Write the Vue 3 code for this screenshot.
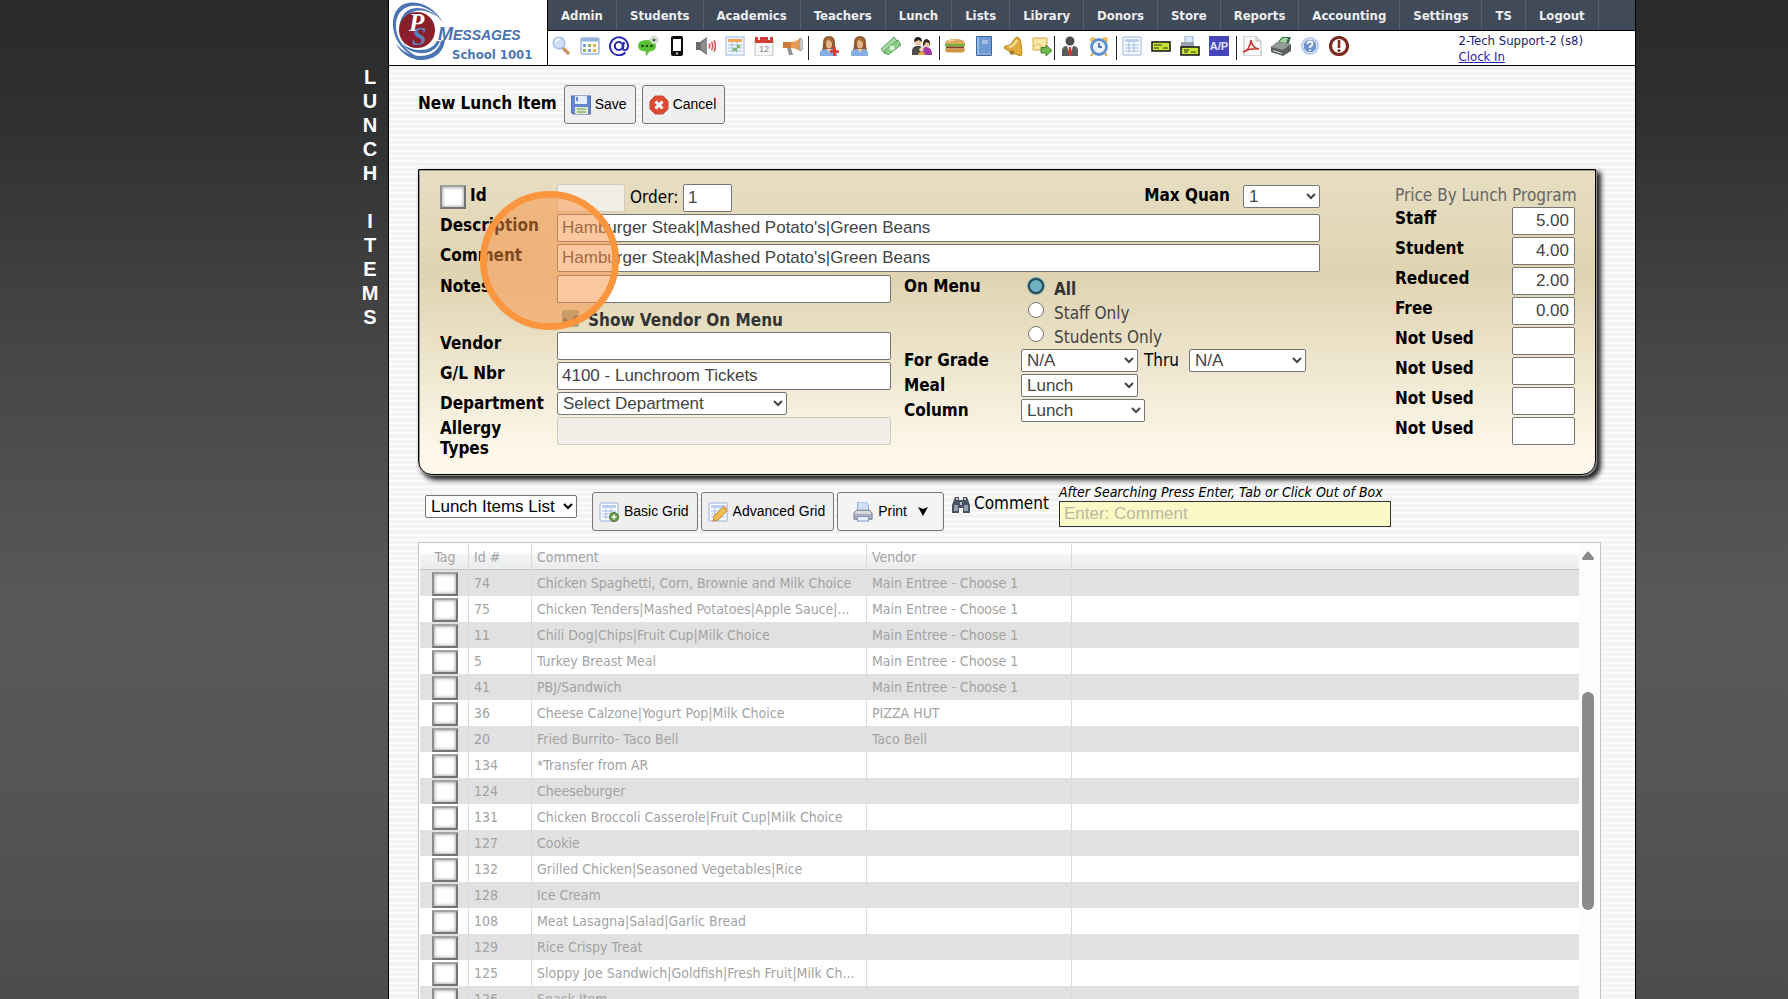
<script setup>
import { ref } from 'vue'

const sideTitle = 'LUNCH ITEMS'.split('')

const menu = ['Admin', 'Students', 'Academics', 'Teachers', 'Lunch', 'Lists', 'Library', 'Donors', 'Store', 'Reports', 'Accounting', 'Settings', 'TS', 'Logout']

const person = '<path d="M1 20v-3q0-3 4-4h9q4 1 4 4v3z" fill="#86aee6"/><path d="M7 12h6l-3 5z" fill="#f0c9a0"/><path d="M3 14q1-3 1-7 0-7 6-7t6 7q0 4 1 7l-4-1H8z" fill="#8f5a34"/><ellipse cx="10" cy="8" rx="3" ry="4.500" fill="#e8b58a"/><path d="M6 7q2-1 3-4 2 3 5 4V4l-4-3-4 3z" fill="#a86d3b"/>'
const grid = '<rect x="1" y="1" width="18" height="18" rx="1" fill="#fff" stroke="#8fb1de"/><rect x="3" y="3" width="14" height="3" fill="#b8cfee"/><path d="M3 9h14M3 12h14M3 15h14M7 6v11M12 6v11" stroke="#9dbbe4" fill="none"/>'

const groups = [
  {
    kind: 'first',
    icons: [
      ['Search', '<path d="M12 12l5 5" stroke="#c89a62" stroke-width="3.500" stroke-linecap="round"/><circle cx="8" cy="7" r="5.800" fill="#cfe0f8" stroke="#a9bfe3" stroke-width="1.500"/><path d="M4.500 6q1-3 4-3" stroke="#fff" stroke-width="1.500" fill="none"/>'],
      ['Schedule', '<rect x="1" y="2" width="18" height="16" rx="1" fill="#fff" stroke="#6f93c7"/><rect x="1.500" y="2.500" width="17" height="3" fill="#8fb1e2"/><path d="M3 8h3v3H3zM8 13h3v3H8z" fill="#7aa5dc"/><path d="M8 8h3v3H8zM3 13h3v3H3z" fill="#8dbb62"/><path d="M13 8h3v3h-3zM13 13h3v3h-3z" fill="#efb046"/>'],
      ['Email', '<path d="M16.500 16.500A9 9 0 1 1 19 10q0 4-3.200 4.200-2.300 0-1.800-2.600L15 6" fill="none" stroke="#2a2ab5" stroke-width="2"/><circle cx="9.800" cy="10" r="4" fill="none" stroke="#2a2ab5" stroke-width="2.200"/>'],
      ['Chat', '<path d="M9 4q9 0 9 6 0 5-6.500 5.500L8 20l-.5-4.500Q0 15 0 10q0-6 9-6z" fill="#5cc235"/><circle cx="4.500" cy="10" r="1.300" fill="#17430a"/><circle cx="9" cy="10" r="1.300" fill="#17430a"/><circle cx="13.500" cy="10" r="1.300" fill="#17430a"/><circle cx="16" cy="4" r="3.600" fill="#eef5ea" stroke="#b5c9ac"/><path d="M16 2v4M14 4h4" stroke="#234f16"/>'],
      ['Phone', '<rect x="4" y="0" width="12" height="20" rx="2" fill="#0c0c0c"/><rect x="6" y="3" width="8" height="12" fill="#fff"/><circle cx="10" cy="17.500" r="1.200" fill="#bbb"/>'],
      ['Speaker', '<path d="M0 6h4l7-5v18l-7-5H0z" fill="#6c6c6c"/><path d="M5 7l6-5v16l-6-5z" fill="#8d8d8d"/><path d="M13 7.500q1.500 2.500 0 5M15.500 6q2.500 4 0 8M18 4.500q3 5.500 0 11" stroke="#db5a5f" stroke-width="1.700" fill="none"/>'],
      ['Report', '<rect x="1" y="1" width="18" height="18" fill="#f4f8fe" stroke="#9ab8e2"/><rect x="3" y="3" width="14" height="3" fill="#f2a35c"/><path d="M3 9h14M3 12h14M3 15h14M7 6v11M12 6v11" stroke="#a8c0e0" fill="none"/><path d="M12 9h3v3h-3zM8 12h4v3H8z" fill="#7dba66"/>'],
      ['Calendar', '<rect x="1" y="2" width="18" height="18" rx="1" fill="#f5f5f5" stroke="#c2c2c2"/><path d="M1 1h18v6H1z" fill="#cf3d33"/><path d="M5 0v4M15 0v4" stroke="#fff" stroke-width="2"/><text x="10" y="16" text-anchor="middle" font-size="9" font-family="Liberation Sans, sans-serif" fill="#8a8a8a">12</text>'],
      ['Announce', '<path d="M8 6q5 0 9-4v13q-4-3-9-3z" fill="#e79a55"/><path d="M0 6h8v6H0z" fill="#c9793a"/><path d="M17 2q3 0 3 6.500T17 15z" fill="#d7d7d7" stroke="#a5a5a5"/><path d="M4 12h4l2 7H6z" fill="#8f9499"/>'],
    ],
  },
  {
    kind: 'wide',
    icons: [
      ['Add person', person + '<path d="M15.500 11v9M11 15.500h9" stroke="#e0372c" stroke-width="2.500"/>'],
      ['Person', person],
      ['Money', '<path d="M0 13L13 1l3 4L4 18z" fill="#a5d6a0" stroke="#5f9f60"/><path d="M3 15L17 4l3 5L7 19z" fill="#8ccb88" stroke="#5f9f60"/><circle cx="11" cy="12" r="2.500" fill="#d8f0d2"/>'],
      ['Family', '<path d="M0 19v-4q0-4 4-5h4q3 1 3 4v5z" fill="#4b4b4b"/><path d="M9 19q0-8 5-8 6 0 6 8z" fill="#9d3aa6"/><circle cx="6" cy="6" r="3.500" fill="#eec49c"/><path d="M2 6q0-5 4-5t4 5L7 4z" fill="#2c2420"/><circle cx="14.500" cy="8" r="3" fill="#eec49c"/><path d="M11 11V7q1-4 4-4 4 1 3 8l-1-4-3-1z" fill="#2c2420"/><circle cx="9.500" cy="13.500" r="2.200" fill="#f3cfa9"/><path d="M6 19q0-3 3.500-3t3.500 3z" fill="#e8a53c"/>'],
    ],
  },
  {
    kind: 'plain',
    icons: [
      ['Burger', '<path d="M0 8q0-5 10-5t10 5z" fill="#d9a75a"/><path d="M3 6q2-2 7-2" stroke="#f1d39a" stroke-width="1.500" fill="none"/><path d="M0 8h20v2.500H0z" fill="#77b03a"/><path d="M1 10.500h18v2H1z" fill="#7c3f20"/><path d="M0 12.500h20q0 4-3 4H3q-3 0-3-4z" fill="#cf9648"/>'],
      ['Book', '<rect x="2" y="0" width="16" height="20" rx="1" fill="#3a66a6"/><rect x="5" y="1" width="12" height="16" fill="#6d9ad3"/><path d="M3 1h2v18H3z" fill="#9dbbe2"/><path d="M5 18h12" stroke="#e8eef8"/><path d="M8 5h6M8 7h6" stroke="#d7e5f7"/>'],
      ['Bell', '<path d="M15 1q3 2 3 7l1 9-1 3q-9-2-17-8l1-2q6 0 8-5 2-4 5-4z" fill="#e2ad3c" stroke="#b98420"/><path d="M14 4q-3 6-8 7" stroke="#fbe19a" stroke-width="2" fill="none"/><circle cx="9" cy="16.500" r="2.300" fill="#a97722"/>'],
      ['Forward', '<path d="M1 2h14v12H1z" fill="#fbe7a8" stroke="#d9a63c"/><path d="M1 11l5-3 5 3" fill="none" stroke="#e0b65a"/><path d="M9 11.500h5V9l6 5.500-6 5.500v-3H9z" fill="#74b84d" stroke="#42872a"/>'],
    ],
  },
  {
    kind: 'tight',
    icons: [
      ['Manager', '<circle cx="10" cy="5" r="4.500" fill="#4e4e4e"/><path d="M2 20v-5q0-5 5-5h6q5 0 5 5v5z" fill="#5b5b5b"/><path d="M7 10h6l-3 10z" fill="#fff"/><path d="M9 11h2l1 6-2 3-2-3z" fill="#cc3c35"/>'],
      ['Clock', '<circle cx="4" cy="4" r="3" fill="#eec261"/><circle cx="16" cy="4" r="3" fill="#eec261"/><path d="M4 17l-2 3M16 17l2 3" stroke="#d7a845" stroke-width="2"/><circle cx="10" cy="11" r="7.500" fill="#e9f1fb" stroke="#5f8fce" stroke-width="2.800"/><path d="M10 7v4h3" stroke="#35588c" stroke-width="1.500" fill="none"/>'],
    ],
  },
  {
    kind: 'plain',
    icons: [
      ['Table', grid],
      ['Check', '<rect x="1" y="6" width="18" height="9" fill="#c8e632" stroke="#111" stroke-width="1.500"/><path d="M3 9h8M3 12h5M12 12h5" stroke="#333"/>'],
      ['Print check', '<path d="M5 0h8v8H5z" fill="#d9e7f7" stroke="#8aa9cf"/><rect x="1" y="6" width="13" height="7" rx="1" fill="#9aa4b0"/><rect x="1" y="11" width="18" height="8" fill="#c8e632" stroke="#111" stroke-width="1.500"/><path d="M4 14h5M4 16h4M11 16h5" stroke="#333"/>'],
      ['A/P', '<path d="M0 0h20v20H0z" fill="#4646b8"/><text x="10" y="14" text-anchor="middle" font-size="11" font-weight="bold" font-family="Liberation Sans, sans-serif" fill="#e3e6fa">A/P</text>'],
    ],
  },
  {
    kind: 'plain',
    icons: [
      ['PDF', '<path d="M2 0h12l5 5v15H2z" fill="#f8f8f8" stroke="#b9b9b9"/><path d="M14 0v5h5" fill="#e3e3e3" stroke="#b9b9b9"/><path d="M1 16q7-2 8-12 1 8 8 9-9-1-16 3z" fill="none" stroke="#c8372f" stroke-width="1.600"/>'],
      ['Printer', '<path d="M6 7l5-6 9 0-3 9z" fill="#3f6d4c"/><path d="M8 6l4-4 5 0-2 5z" fill="#a6d3a2"/><path d="M0 11l6-5 14 2v7l-8 5-12-4z" fill="#5b605c"/><path d="M0 11l6-5 14 2-8 6z" fill="#959b96"/><path d="M2 14l9 3v1l-9-3z" fill="#dfe3df"/>'],
      ['Help', '<circle cx="10" cy="10" r="9" fill="#b5c9e8"/><circle cx="10" cy="10" r="6.800" fill="#6f92cb" stroke="#e5edf8"/><path d="M7.500 8q0-2.500 2.500-2.500T12.500 8q0 1.500-2.500 2.500v1.500M10 13.500v1.500" stroke="#fff" stroke-width="1.800" fill="none"/>'],
      ['Alert', '<circle cx="10" cy="10" r="8.500" fill="#fff" stroke="#7d2820" stroke-width="3.200"/><path d="M10 4v8" stroke="#7d2820" stroke-width="2.600"/><circle cx="10" cy="14.500" r="1.500" fill="#7d2820"/>'],
    ],
  },
]

const description = ref("Hamburger Steak|Mashed Potato's|Green Beans")
const comment = ref("Hamburger Steak|Mashed Potato's|Green Beans")
const account = ref('4100 - Lunchroom Tickets')
const order = ref('1')
const onMenu = ref('All')
const menuChoices = ['All', 'Staff Only', 'Students Only']

const prices = ref([
  { label: 'Staff', value: '5.00' },
  { label: 'Student', value: '4.00' },
  { label: 'Reduced', value: '2.00' },
  { label: 'Free', value: '0.00' },
  { label: 'Not Used', value: '' },
  { label: 'Not Used', value: '' },
  { label: 'Not Used', value: '' },
  { label: 'Not Used', value: '' },
])

const main = 'Main Entree - Choose 1'
const items = [
  [74, 'Chicken Spaghetti, Corn, Brownie and Milk Choice', main],
  [75, 'Chicken Tenders|Mashed Potatoes|Apple Sauce|...', main],
  [11, 'Chili Dog|Chips|Fruit Cup|Milk Choice', main],
  [5, 'Turkey Breast Meal', main],
  [41, 'PBJ/Sandwich', main],
  [36, 'Cheese Calzone|Yogurt Pop|Milk Choice', 'PIZZA HUT'],
  [20, 'Fried Burrito- Taco Bell', 'Taco Bell'],
  [134, '*Transfer from AR', ''],
  [124, 'Cheeseburger', ''],
  [131, 'Chicken Broccoli Casserole|Fruit Cup|Milk Choice', ''],
  [127, 'Cookie', ''],
  [132, 'Grilled Chicken|Seasoned Vegetables|Rice', ''],
  [128, 'Ice Cream', ''],
  [108, 'Meat Lasagna|Salad|Garlic Bread', ''],
  [129, 'Rice Crispy Treat', ''],
  [125, 'Sloppy Joe Sandwich|Goldfish|Fresh Fruit|Milk Ch...', ''],
  [126, 'Snack Item', ''],
]
</script>

<template>
  <div class="page">
    <h1 class="side-title">
      <span v-for="(letter, i) in sideTitle" :key="i">{{ letter }}</span>
    </h1>

    <div class="sheet">
      <header class="top">
        <a class="logo" href="#">
          <svg viewBox="0 0 157 64" width="157" height="64">
            <g fill="#4a74b4">
              <path d="M54 23C46 6 27-1 15 4C2 10 1 29 9 42C15 51 22 56 31 58C16 51 8 40 7 28C6 16 12 8 22 6C34 4 46 11 54 23z" />
              <path d="M49 18C39 6 22 5 15 14C8 23 9 36 17 46C12 34 12 24 18 16C26 8 39 9 49 18z" />
              <path d="M56 39C55 54 43 61 29 60C19 58 11 52 7 44C14 52 22 56 31 56C42 56 50 50 52 41z" />
              <path d="M51 41C48 50 39 54 30 53C23 52 17 49 13 44C19 48 25 50 31 50C39 50 45 47 48 41z" />
            </g>
            <circle cx="28" cy="30" r="18" fill="#8a1f2c" />
            <text x="20" y="31" class="mono-p">P</text>
            <text x="23" y="45" class="mono-s">S</text>
            <text x="49" y="40" class="brand">M<tspan class="brand-small">ESSAGES</tspan></text>
            <text x="63" y="59" class="school">School 1001</text>
          </svg>
        </a>
        <div class="top-main">
          <nav class="menu">
            <a v-for="m in menu" :key="m" href="#">{{ m }}</a>
          </nav>
          <div class="tools">
            <div v-for="(g, gi) in groups" :key="gi" class="group" :class="g.kind">
              <button v-for="ic in g.icons" :key="ic[0]" type="button" class="tool" :aria-label="ic[0]">
                <svg viewBox="0 0 20 20" width="20" height="20" v-html="ic[1]"></svg>
              </button>
            </div>
            <div class="user">
              <span>2-Tech Support-2 (s8)</span>
              <a href="#">Clock In</a>
            </div>
          </div>
        </div>
      </header>

      <main class="body">
        <div class="heading">
          <h2>New Lunch Item</h2>
          <button type="button" class="btn">
            <svg viewBox="0 0 20 20" width="20" height="20">
              <path d="M0 1h20v18H2l-2-2z" fill="#6586cf" stroke="#4562a8" />
              <path d="M4 1h12v8H4z" fill="#e6edfa" />
              <path d="M5 2h2v4H5z" fill="#6586cf" />
              <path d="M4 12h13v7H4z" fill="#dfe8d8" />
              <path d="M6 14h9M6 17h9" stroke="#97b86a" stroke-width="1.500" />
            </svg>
            <span>Save</span>
          </button>
          <button type="button" class="btn">
            <svg viewBox="0 0 20 20" width="20" height="20">
              <path d="M6 1h8l5 5v8l-5 5H6l-5-5V6z" fill="#dd4a34" stroke="#c94a38" stroke-linejoin="round" />
              <path d="M6.500 6.500l7 7M13.500 6.500l-7 7" stroke="#fff" stroke-width="3" />
            </svg>
            <span>Cancel</span>
          </button>
        </div>

        <form class="panel" @submit.prevent>
          <div class="form">
            <div class="line">
              <span class="label id-label">
                <input id="tag-item" type="checkbox" class="tag" />
                <label for="tag-item">Id</label>
              </span>
              <input class="box id-box" aria-label="Id" disabled />
              <label class="order" for="order">Order:</label>
              <input id="order" v-model="order" class="box order-box" />
              <label class="quan" for="quan">Max Quan</label>
              <select id="quan" class="select quan-select"><option>1</option></select>
            </div>
            <div class="line">
              <label class="label" for="desc">Description</label>
              <input id="desc" v-model="description" class="box grow" />
            </div>
            <div class="line">
              <label class="label" for="comm">Comment</label>
              <input id="comm" v-model="comment" class="box grow" />
            </div>

            <div class="split">
              <div class="half">
                <div class="line">
                  <label class="label" for="notes">Notes</label>
                  <input id="notes" class="box grow" />
                </div>
                <div class="line show-vendor">
                  <input id="show" type="checkbox" checked disabled />
                  <label for="show">Show Vendor On Menu</label>
                </div>
                <div class="line">
                  <label class="label" for="vendor">Vendor</label>
                  <input id="vendor" class="box grow" />
                </div>
                <div class="line">
                  <label class="label" for="gl">G/L Nbr</label>
                  <input id="gl" v-model="account" class="box grow" />
                </div>
                <div class="line">
                  <label class="label" for="dept">Department</label>
                  <select id="dept" class="select dept-select"><option>Select Department</option></select>
                </div>
                <div class="line">
                  <label class="label" for="allergy">Allergy Types</label>
                  <input id="allergy" class="box grow" disabled />
                </div>
              </div>

              <div class="half">
                <div class="line radios">
                  <span class="label">On Menu</span>
                  <div class="choices">
                    <label v-for="c in menuChoices" :key="c" :class="{ on: onMenu === c }">
                      <input v-model="onMenu" type="radio" name="menu" :value="c" />
                      <span>{{ c }}</span>
                    </label>
                  </div>
                </div>
                <div class="line">
                  <label class="label" for="g1">For Grade</label>
                  <select id="g1" class="select grade"><option>N/A</option></select>
                  <label class="thru" for="g2">Thru</label>
                  <select id="g2" class="select grade"><option>N/A</option></select>
                </div>
                <div class="line">
                  <label class="label" for="meal">Meal</label>
                  <select id="meal" class="select grade"><option>Lunch</option></select>
                </div>
                <div class="line">
                  <label class="label" for="col">Column</label>
                  <select id="col" class="select column"><option>Lunch</option></select>
                </div>
              </div>
            </div>
          </div>

          <fieldset class="prices">
            <legend>Price By Lunch Program</legend>
            <div v-for="(p, i) in prices" :key="i" class="price">
              <label :for="'price' + i">{{ p.label }}</label>
              <input :id="'price' + i" v-model="p.value" class="box price-box" />
            </div>
          </fieldset>

          <div class="spot"></div>
        </form>

        <div class="bar">
          <select class="select list-select" aria-label="List"><option>Lunch Items List</option></select>
          <div class="bar-buttons">
            <button type="button" class="btn">
              <svg viewBox="0 0 20 20" width="20" height="20">
                <g v-html="grid"></g>
                <circle cx="15" cy="15" r="4.500" fill="#6a9a45" stroke="#47722a" />
                <path d="M15 12.500v5M12.500 15h5" stroke="#fff" stroke-width="1.500" />
              </svg>
              <span>Basic Grid</span>
            </button>
            <button type="button" class="btn">
              <svg viewBox="0 0 20 20" width="20" height="20">
                <g v-html="grid"></g>
                <path d="M5 19l1-5 9-9 4 4-9 9z" fill="#f0bd55" stroke="#c98f2c" />
                <path d="M15 5l2-1 2 2v3z" fill="#e79a88" />
              </svg>
              <span>Advanced Grid</span>
            </button>
            <button type="button" class="btn print">
              <svg viewBox="0 0 22 22" width="20" height="20">
                <path d="M5 0h9l3 3v9H5z" fill="#cfe0f7" stroke="#8aa8d4" />
                <path d="M1 12l3-3h14l3 3v7H1z" fill="#a9aeb8" stroke="#747b86" />
                <path d="M2 12l2-2h14l2 2v1H2z" fill="#d9dde2" />
                <path d="M5 16h12v5H5z" fill="#e6effb" stroke="#6f92c6" />
              </svg>
              <span>Print</span>
              <svg class="caret" viewBox="0 0 10 9" width="10" height="9"><path d="M0 0l5 2 5-2-5 9z" /></svg>
            </button>
          </div>
          <svg class="binoculars" viewBox="0 0 18 18" width="18" height="18">
            <path d="M3 2h4v3h4V2h4l3 8v8h-7v-5H7v5H0v-8z" fill="#4a5361" />
            <path d="M2 10h4v6H2zM12 10h4v6h-4z" fill="#93a0b0" />
            <path d="M4 3h2v2H4zM12 3h2v2h-2zM8 7h2v3H8z" fill="#b9c3cf" />
          </svg>
          <label class="bar-label" for="find">Comment</label>
          <div class="search">
            <em>After Searching Press Enter, Tab or Click Out of Box</em>
            <input id="find" placeholder="Enter: Comment" />
          </div>
        </div>

        <section class="grid">
          <table>
            <colgroup><col class="c-tag" /><col class="c-id" /><col class="c-comment" /><col class="c-vendor" /><col /></colgroup>
            <thead>
              <tr><th class="tag-cell">Tag</th><th>Id #</th><th>Comment</th><th>Vendor</th><th></th></tr>
            </thead>
            <tbody>
              <tr v-for="r in items" :key="r[0]">
                <td class="tag-cell"><input type="checkbox" class="tag" :aria-label="'Tag ' + r[0]" /></td>
                <td>{{ r[0] }}</td>
                <td>{{ r[1] }}</td>
                <td>{{ r[2] }}</td>
                <td></td>
              </tr>
            </tbody>
          </table>
          <div class="scroll">
            <svg viewBox="0 0 12 9" width="12" height="9"><path d="M5 1q1-1 2 0l5 6q0 2-1 2H1Q0 9 0 7z" fill="#8b8b8b" /></svg>
            <span class="thumb"></span>
          </div>
        </section>
      </main>
    </div>
  </div>
</template>

<style>
body {
  overflow: hidden;
  background: #505050;
}
</style>

<style scoped>
.page {
  --ui: "DejaVu Sans Condensed", "Noto Sans", sans-serif;
  --field: "Liberation Sans", Arial, sans-serif;
  display: grid;
  grid-template-columns: 388px minmax(0, 1fr) 152px;
  height: 100vh;
  box-sizing: border-box;
  overflow: hidden;
  background: linear-gradient(#2a2a2a 0, #2f3031 12%, #454545 34%, #585858 60%, #565656 75%, #4c4c4c 100%);
  font-family: var(--ui);
  font-size: 17px;
  color: #000;
}
.page * {
  box-sizing: border-box;
}
h1,
h2 {
  margin: 0;
}
.side-title {
  display: flex;
  flex-direction: column;
  align-items: flex-end;
  padding: 65px 8px 0 0;
  font: bold 20px/24px var(--field);
  color: #fff;
}
.side-title span {
  width: 20px;
  height: 24px;
  text-align: center;
}
.sheet {
  display: flex;
  flex-direction: column;
  min-height: 0;
  border: solid #000;
  border-width: 0 1px;
  background: repeating-linear-gradient(#fafafa 0, #fafafa 2px, #f1f1f1 3px, #f1f1f1 5px, #fbfbfb 6px, #fbfbfb 8px, #f1f1f1 9px, #f1f1f1 10px, #fbfbfb 11px, #fbfbfb 13px, #f1f1f1 14px, #f1f1f1 15px, #fafafa 16px);
}

/* header */
.top {
  display: flex;
  height: 66px;
  background: #fff;
  border-bottom: 1px solid #000;
}
.logo {
  width: 159px;
  border-right: 1px solid #000;
}
.logo svg {
  display: block;
}
.mono-p {
  font: italic bold 25px "Liberation Serif", serif;
  fill: #fff;
}
.mono-s {
  font: italic bold 26px "Liberation Serif", serif;
  fill: #5a82c0;
}
.brand {
  font: italic bold 18px var(--field);
  fill: #4a72b0;
}
.brand-small {
  font-size: 14px;
}
.school {
  font: bold 13px var(--ui);
  fill: #4a78b5;
}
.top-main {
  flex: 1;
  display: flex;
  flex-direction: column;
}
.menu {
  display: flex;
  height: 31px;
  background: #414a59;
  border-bottom: 1px solid #000;
}
.menu a {
  padding: 0 13px;
  border-right: 1px solid #596170;
  font-size: 13px;
  font-weight: bold;
  line-height: 31px;
  color: #eceef0;
  text-decoration: none;
}
.tools {
  display: flex;
  flex: 1;
  align-items: flex-start;
  padding: 5px 52px 0 3px;
}
.group {
  display: flex;
  gap: 9px;
  height: 24px;
}
.group + .group {
  margin-left: 7px;
  padding-left: 5px;
  border-left: 1px solid #222;
}
.group.wide {
  gap: 11px;
}
.group + .group.wide {
  margin-left: 5px;
  padding-left: 10px;
}
.group + .group.tight {
  margin-left: 2px;
}
.tool {
  width: 20px;
  height: 20px;
  padding: 0;
  border: 0;
  background: none;
}
.tool svg {
  display: block;
}
.user {
  display: flex;
  flex-direction: column;
  margin-left: auto;
  margin-top: -3px;
  font-size: 13px;
  line-height: 16px;
  color: #1c1a72;
}
.user a {
  color: #2a20b0;
}

/* heading */
.body {
  flex: 1;
  display: flex;
  flex-direction: column;
  min-height: 0;
  padding: 19px 34px 0 29px;
}
.heading {
  display: flex;
  align-items: center;
  gap: 6px;
  height: 39px;
  margin-bottom: 45px;
}
h2 {
  padding: 0 1px 3px 0;
  font-size: 17px;
  line-height: 20px;
}
.btn {
  display: inline-flex;
  align-items: center;
  gap: 4px;
  height: 39px;
  padding: 0 8px 0 6px;
  border: 1px solid #767676;
  border-radius: 3px;
  background: #efefef;
  font: 14px var(--field);
  color: #000;
  white-space: nowrap;
}
.btn span {
  padding-bottom: 2px;
}

/* form panel */
.panel {
  position: relative;
  display: grid;
  grid-template-columns: minmax(0, 1fr) 180px;
  column-gap: 75px;
  margin-right: 5px;
  height: 306px;
  padding: 14px 20px 0 21px;
  border: 1px solid #000;
  border-radius: 0 0 14px 14px;
  background: linear-gradient(#e7dec2 0, #dfd3b1 35%, #fcf7e9 92%);
  box-shadow: inset 1px 1px 0 #9a9484, 1px 1px 0 #8e8e8e, 4px 4px 5px 1px #222;
}
.form {
  display: flex;
  flex-direction: column;
  gap: 2px;
}
.line {
  display: flex;
  align-items: flex-start;
}
.label {
  flex: 0 0 117px;
  padding: 1px 8px 0 0;
  font-weight: bold;
  line-height: 20px;
}
.line > .label {
  height: 21px;
}
.box {
  height: 28px;
  min-width: 0;
  padding: 0 4px;
  border: 1px solid #767676;
  border-radius: 2px;
  background: #fff;
  font: 17px var(--field);
  color: #444;
}
.box:disabled {
  border-color: #cfcbbd;
  background: #f0eee6;
}
.grow {
  flex: 1;
}
.id-label {
  display: flex;
  gap: 4px;
}
.tag {
  appearance: none;
  flex: none;
  width: 26px;
  height: 24px;
  margin: 0;
  border: 2px solid;
  border-color: #a2a2a2 #757575 #757575 #8d8d8d;
  background: #fff;
  box-shadow: inset 0 0 3px 1px #b5b5b5;
}
.id-box {
  width: 68px;
}
.order {
  width: 58px;
  padding-left: 5px;
  line-height: 26px;
}
.order-box {
  width: 49px;
}
.quan {
  margin-left: auto;
  padding-right: 13px;
  font-weight: bold;
  line-height: 22px;
}
.select {
  height: 23px;
  padding: 0 0 0 1px;
  border: 1px solid #767676;
  border-radius: 2px;
  background: #fff;
  font: 17px var(--field);
  color: #444;
}
.quan-select {
  width: 77px;
  margin-top: 1px;
}
.split {
  display: grid;
  grid-template-columns: 451fr 416fr;
  column-gap: 13px;
  margin-top: 1px;
}
.half {
  display: flex;
  flex-direction: column;
  gap: 2px;
}
.show-vendor {
  align-items: center;
  height: 25px;
  padding: 2px 0 0 122px;
  gap: 9px;
  font-weight: bold;
  color: #333;
}
.show-vendor label {
  padding-top: 2px;
}
.show-vendor input {
  appearance: none;
  display: grid;
  place-items: center;
  width: 17px;
  height: 17px;
  margin: 0;
  border-radius: 2px;
  background: #9ba592;
}
.show-vendor input::before {
  content: "";
  width: 10px;
  height: 6px;
  border: solid #5b5a4a;
  border-width: 0 0 3px 3px;
  transform: rotate(-45deg);
}
.dept-select {
  width: 230px;
}
.radios {
  height: 72px;
}
.choices {
  display: flex;
  flex-direction: column;
}
.radios .label {
  margin-right: 7px;
}
.choices label {
  display: flex;
  gap: 10px;
  height: 24px;
  line-height: 28px;
  color: #444;
}
.choices .on {
  font-weight: bold;
  color: #333;
}
.choices input {
  appearance: none;
  width: 16px;
  height: 16px;
  margin: 3px 0 0;
  border: 1px solid #767676;
  border-radius: 50%;
  background: #fff;
}
.choices input:checked {
  border: 2px solid #234a56;
  background: #6fb0c2;
  box-shadow: 0 0 0 1px #6fa9ad;
}
.grade {
  width: 117px;
}
.column {
  width: 124px;
}
.thru {
  width: 51px;
  padding-left: 6px;
  line-height: 22px;
}
.prices {
  min-width: 0;
  margin: 0;
  padding: 0;
  border: 0;
}
.prices legend {
  padding: 0;
  line-height: 23px;
  color: #666;
  white-space: nowrap;
}
.price {
  display: flex;
  justify-content: space-between;
  height: 30px;
  font-weight: bold;
}
.price label {
  line-height: 22px;
}
.price-box {
  width: 63px;
  padding-right: 5px;
  text-align: right;
}
.spot {
  position: absolute;
  left: 61px;
  top: 21px;
  width: 139px;
  height: 139px;
  border: 7px solid #fb953e;
  border-radius: 50%;
  background: rgba(252, 146, 66, 0.5);
  background-clip: padding-box;
  pointer-events: none;
}

/* toolbar */
.bar {
  display: flex;
  align-items: flex-start;
  height: 67px;
  padding: 17px 0 0 7px;
}
.list-select {
  width: 152px;
  margin-top: 3px;
  color: #000;
}
.bar-buttons {
  display: flex;
  gap: 3px;
  margin: 0 8px 0 15px;
}
.bar-buttons .btn {
  gap: 5px;
}
.bar-buttons .print {
  padding: 0 15px;
  background: #f4f4f4;
}
.caret {
  margin-left: 6px;
}
.binoculars {
  margin: 3px 4px 0 0;
}
.bar-label {
  width: 85px;
  line-height: 22px;
}
.search {
  display: flex;
  flex-direction: column;
  width: 332px;
  margin-top: -8px;
}
.search em {
  font-size: 14px;
  line-height: 17px;
  white-space: nowrap;
}
.search input {
  width: 100%;
  height: 26px;
  padding: 0 4px;
  border: 1px solid #333;
  background: #fbf9c6;
  font: 17px var(--field);
}
.search input::placeholder {
  color: #b9b8a2;
}

/* item table */
.grid {
  flex: 1;
  display: flex;
  align-items: flex-start;
  min-height: 0;
  overflow: hidden;
  padding: 1px 1px 0;
  border: solid #c4c4c4;
  border-width: 1px 1px 0;
  background: #fff;
}
table {
  flex: 1;
  width: 0;
  table-layout: fixed;
  border-collapse: separate;
  border-spacing: 0;
  font-size: 14px;
  color: #a3a3a3;
}
.c-tag {
  width: 49px;
}
.c-id {
  width: 63px;
}
.c-comment {
  width: 335px;
}
.c-vendor {
  width: 205px;
}
th,
td {
  height: 26px;
  padding: 0 5px;
  border-right: 1px solid #dcdcdc;
  overflow: hidden;
  font-weight: normal;
  line-height: 24px;
  text-align: left;
  text-overflow: ellipsis;
  white-space: nowrap;
}
th:last-child,
td:last-child {
  border-right: 0;
}
th {
  border-bottom: 1px solid #c4c4c4;
  background: linear-gradient(#fff 35%, #f3f4f6 45%, #eaebed);
}
td.tag-cell,
th.tag-cell {
  padding: 0 0 0 2px;
  text-align: center;
}
td .tag {
  display: block;
  margin: 1px auto 0;
}
tbody tr:nth-child(odd) {
  background: #e1e1e1;
}
.scroll {
  display: flex;
  flex-direction: column;
  align-items: center;
  align-self: stretch;
  width: 20px;
  padding: 7px 4px 0 2px;
  background: #fcfcfc;
}
.scroll svg {
  flex: none;
}
.thumb {
  flex: none;
  width: 12px;
  height: 218px;
  margin-top: 132px;
  border-radius: 6px;
  background: #8b8b8b;
}
</style>
